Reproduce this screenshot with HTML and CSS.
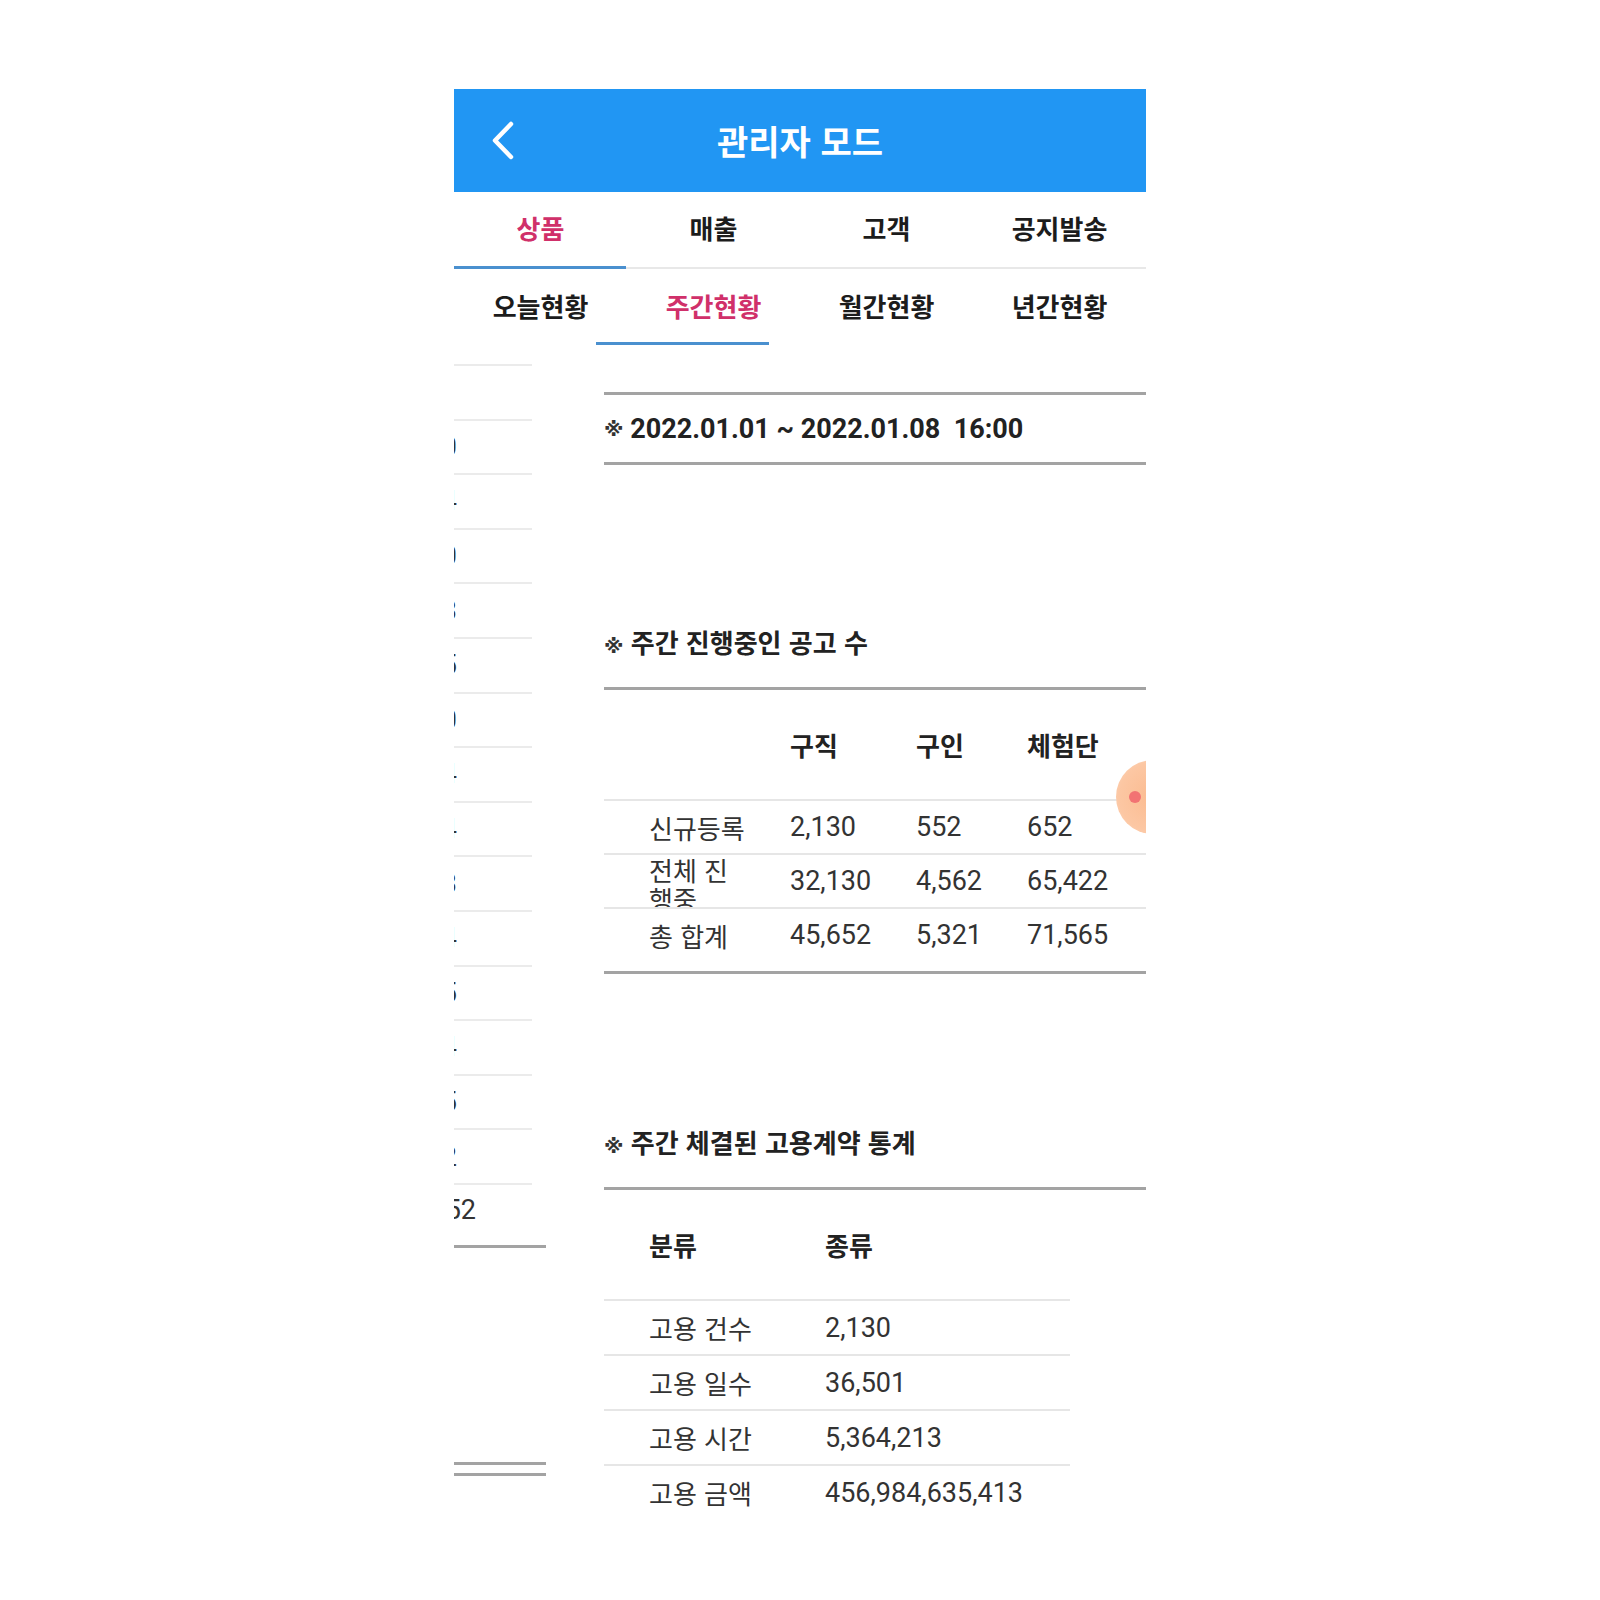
FILE: index.html
```html
<!DOCTYPE html>
<html lang="ko">
<head>
    <meta charset="UTF-8">
    <meta name="viewport" content="width=device-width, initial-scale=1.0">
    <title>관리자 모드</title>
    <link rel="stylesheet" href="styles.css">
</head>
<body>
    <div class="screen">
        <div class="appbar">
            <span class="back">
                <svg width="24" height="39" viewBox="0 0 24 39">
                    <polyline points="20,3 4,19.5 20,36" fill="none" stroke="#fff" stroke-width="4.5" stroke-linecap="round" stroke-linejoin="round"/>
                </svg>
            </span>
            <h1 class="title">관리자 모드</h1>
            <span></span>
        </div>

        <div class="tabs main-tabs">
            <div class="tab active">상품</div>
            <div class="tab">매출</div>
            <div class="tab">고객</div>
            <div class="tab">공지발송</div>
            <div class="indicator"></div>
        </div>

        <div class="tabs sub-tabs">
            <div class="tab">오늘현황</div>
            <div class="tab active">주간현황</div>
            <div class="tab">월간현황</div>
            <div class="tab">년간현황</div>
            <div class="indicator"></div>
        </div>

        <div class="pager">
            <!-- previous page, still sliding out -->
            <div class="prev-page">
                <div class="prev-row"></div>
                <div class="prev-row"><span class="prev-num">2,130</span></div>
                <div class="prev-row"><span class="prev-num">32,134</span></div>
                <div class="prev-row"><span class="prev-num">45,650</span></div>
                <div class="prev-row"><span class="prev-num">2,133</span></div>
                <div class="prev-row"><span class="prev-num">36,505</span></div>
                <div class="prev-row"><span class="prev-num">5,360</span></div>
                <div class="prev-row"><span class="prev-num">984,214</span></div>
                <div class="prev-row"><span class="prev-num">214</span></div>
                <div class="prev-row"><span class="prev-num">1,653</span></div>
                <div class="prev-row"><span class="prev-num">3,214</span></div>
                <div class="prev-row"><span class="prev-num">655</span></div>
                <div class="prev-row"><span class="prev-num">4,564</span></div>
                <div class="prev-row"><span class="prev-num">215</span></div>
                <div class="prev-row"><span class="prev-num">5,652</span></div>
                <div class="prev-row last"><span class="prev-num wide">652</span></div>
                <div class="prev-rule"></div>
                <div class="prev-rule gap"></div>
                <div class="prev-rule close"></div>
            </div>

            <div class="page">
                <div class="period"><span class="mark">※</span> 2022.01.01 ~ 2022.01.08  16:00</div>

                <div class="section-title"><span class="mark">※</span> 주간 진행중인 공고 수</div>
                <div class="stats">
                    <div class="stats-head">
                        <span class="cell label"></span>
                        <span class="cell">구직</span>
                        <span class="cell">구인</span>
                        <span class="cell">체험단</span>
                    </div>
                    <div class="stats-row">
                        <span class="cell label">신규등록</span>
                        <span class="cell num">2,130</span>
                        <span class="cell num">552</span>
                        <span class="cell num">652</span>
                    </div>
                    <div class="stats-row">
                        <span class="cell label wrap">전체 진행중</span>
                        <span class="cell num">32,130</span>
                        <span class="cell num">4,562</span>
                        <span class="cell num">65,422</span>
                    </div>
                    <div class="stats-row">
                        <span class="cell label">총 합계</span>
                        <span class="cell num">45,652</span>
                        <span class="cell num">5,321</span>
                        <span class="cell num">71,565</span>
                    </div>
                </div>

                <div class="section-title second"><span class="mark">※</span> 주간 체결된 고용계약 통계</div>
                <div class="contracts">
                    <div class="contracts-head">
                        <span class="cell label">분류</span>
                        <span class="cell">종류</span>
                    </div>
                    <div class="contracts-row">
                        <span class="cell label">고용 건수</span>
                        <span class="cell num">2,130</span>
                    </div>
                    <div class="contracts-row">
                        <span class="cell label">고용 일수</span>
                        <span class="cell num">36,501</span>
                    </div>
                    <div class="contracts-row">
                        <span class="cell label">고용 시간</span>
                        <span class="cell num">5,364,213</span>
                    </div>
                    <div class="contracts-row">
                        <span class="cell label">고용 금액</span>
                        <span class="cell num">456,984,635,413</span>
                    </div>
                </div>
            </div>
        </div>

        <div class="touch"><div class="touch-dot"></div></div>
    </div>
</body>
</html>
```

FILE: styles.css
```css
* {
    box-sizing: border-box;
}

body {
    margin: 0;
    background: #fff;
    font-family: "Noto Sans CJK KR", "Noto Sans", sans-serif;
    color: #222;
}

.screen {
    position: relative;
    width: 692px;
    height: 1511px;
    margin: 89px 0 0 454px;
    overflow: hidden;
    background: #fff;
}

/* app bar */
.appbar {
    display: grid;
    grid-template-columns: 100px 1fr 100px;
    align-items: center;
    height: 103px;
    background: #2196f3;
    color: #fff;
}

.back {
    display: flex;
    padding-left: 37px;
}

.title {
    margin: 0;
    text-align: center;
    font-size: 34px;
    font-weight: 700;
}

/* tabs */
.tabs {
    position: relative;
    display: flex;
    height: 77px;
}

.main-tabs {
    border-bottom: 2px solid #e8e8e8;
}

.tab {
    flex: 1;
    display: flex;
    align-items: center;
    justify-content: center;
    padding-bottom: 4px;
    font-size: 26px;
    font-weight: 700;
    color: #1c1c1c;
}

.tab.active {
    color: #d0306a;
}

.indicator {
    position: absolute;
    left: 0;
    bottom: -2px;
    width: 172px;
    height: 3px;
    background: #4a90cf;
}

.sub-tabs .indicator {
    left: 142px;
    bottom: 1px;
    width: 173px;
}

/* pages */
.pager {
    display: flex;
}

.prev-page {
    flex: none;
    width: 150px;
    padding-top: 18px;
}

.prev-row {
    display: flex;
    align-items: center;
    width: 78px;
    height: 54.6px;
    border-top: 2px solid #ebebeb;
}

.prev-row.last {
    height: 52px;
}

.prev-num {
    display: flex;
    justify-content: flex-end;
    width: 3px;
    white-space: nowrap;
    font-family: Roboto, sans-serif;
    font-size: 27px;
    color: #333;
}

.prev-num.wide {
    width: 22px;
}

.prev-rule {
    width: 92px;
    height: 3px;
    margin-top: 10px;
    background: #a3a3a3;
}

.prev-rule.gap {
    margin-top: 214px;
}

.prev-rule.close {
    margin-top: 8px;
}

.page {
    flex: none;
    width: 600px;
}

.mark {
    line-height: 1;
    font-family: "DejaVu Sans", sans-serif;
    font-size: 20px;
    font-weight: 700;
    color: #333;
}

.period {
    display: flex;
    align-items: center;
    height: 73px;
    margin-top: 46px;
    border-top: 3px solid #a3a3a3;
    border-bottom: 3px solid #a3a3a3;
    font-family: Roboto, "Noto Sans CJK KR", sans-serif;
    font-size: 27px;
    font-weight: 700;
    white-space: pre;
}

.section-title {
    height: 66px;
    margin-top: 159px;
    padding-bottom: 27px;
    line-height: 36px;
    font-size: 26px;
    font-weight: 700;
    border-bottom: 3px solid #a3a3a3;
}

.section-title.second {
    margin-top: 150px;
}

/* tables */
.stats-head,
.stats-row {
    display: grid;
    grid-template-columns: 186px 126px 111px 1fr;
}

.contracts {
    width: 466px;
}

.contracts-head,
.contracts-row {
    display: grid;
    grid-template-columns: 221px 1fr;
}

.stats-head,
.contracts-head {
    height: 109px;
    font-size: 26px;
    font-weight: 700;
}

.stats-row,
.contracts-row {
    height: 54px;
    border-top: 2px solid #e6e6e6;
    font-size: 26px;
    color: #333;
}

.contracts-row {
    height: 55px;
}

.stats {
    padding-bottom: 10px;
    border-bottom: 3px solid #a3a3a3;
}

.cell {
    display: flex;
    align-items: center;
    white-space: nowrap;
}

.cell.label {
    padding-left: 45px;
}

.stats .cell.label {
    padding-right: 43px;
}

.cell.wrap {
    display: block;
    align-self: start;
    height: 52px;
    overflow: hidden;
    line-height: 29px;
    white-space: normal;
}

.num {
    font-family: Roboto, sans-serif;
    font-size: 27px;
}

/* touch feedback */
.touch {
    position: absolute;
    left: 662px;
    top: 671px;
    width: 74px;
    height: 74px;
    border-radius: 50%;
    background: radial-gradient(circle, #fbbb90 0%, #fcc7a3 65%, #fdd9c1 100%);
}

.touch-dot {
    position: absolute;
    left: 13px;
    top: 31px;
    width: 12px;
    height: 12px;
    border-radius: 50%;
    background: #f27373;
}
```
